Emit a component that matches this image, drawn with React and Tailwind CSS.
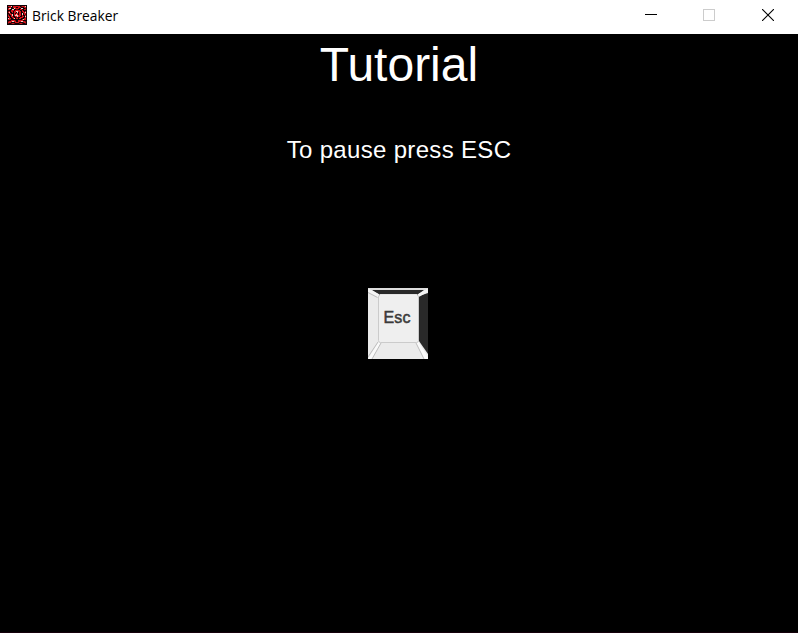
const ICON_ROWS = [
  'kkkkkkkkkkkkkkkkkkkk',
  'krrrwkrrrrrrrkdrrrwk',
  'kkdrkkrrrkkrrrkkkrrk',
  'krwwkkkwrrrrkkwwkkdk',
  'krrkkwwkkddkkrrkkrrk',
  'kkkkrrrkrrrrrkkrkkkk',
  'kdrkrrkrrwwrrrkrrkrk',
  'krwkkrkrrkwkrrkkrrwk',
  'kkrrkkkrkrrkrrkwkrrk',
  'kdkrrwkrrwrkrrkwkrdk',
  'krkkrwkrwwwrrrkrkkrk',
  'krrkrrkkrrwrrkkrrkwk',
  'kkrkkrrkkddkkrrrkkrk',
  'kwrrkkrwkrrkrrkkkrrk',
  'krrdkkkkkkkkkkkrwrrk',
  'kkkkrrrrdkkrrrrrkkkk',
  'kdrrrwwrrkkrrrwwrrdk',
  'krrrkkkkrrrrkkkkdrrk',
  'kdkkdrrdkkkkdrrdkkdk',
  'kkkkkkkkkkkkkkkkkkkk',
];

const ICON_COLORS = { k: '#100306', r: '#d3141b', d: '#650b10', w: '#f0cdc5' };

function AppIcon() {
  return (
    <svg className="h-5 w-5 shrink-0" viewBox="0 0 20 20" shapeRendering="crispEdges">
      {ICON_ROWS.map((row, y) =>
        row.split('').map((c, x) => (
          <rect key={`${x}-${y}`} x={x} y={y} width="1" height="1" fill={ICON_COLORS[c]} />
        ))
      )}
    </svg>
  );
}

function EscKey() {
  return (
    <div className="grid h-[71px] w-[60px]">
      <svg className="col-start-1 row-start-1" width="60" height="71" viewBox="0 0 60 71">
        <rect width="60" height="71" fill="#ebebeb" />
        <path d="M4 2H56L50 6.5H11Z" fill="#292929" />
        <path d="M60 5V66L51 53V8Z" fill="#292929" />
        <path d="M0 1H60" stroke="#d8d8d8" strokeWidth="1.6" />
        <path d="M0 2L10.5 7.5M60 2L50.5 7.5" stroke="#f4f4f4" strokeWidth="3" />
        <path d="M0 4.5L9.5 9.5" stroke="#bdbdbd" strokeWidth="1" />
        <path d="M10.5 54L0 71H4L13 55ZM50.5 54L60 69V71H56L48 55Z" fill="#fafafa" />
        <path d="M10 54L0 69M13 55L4 71M48 55L56 71" fill="none" stroke="#bdbdbd" />
        <rect x="10.5" y="7" width="40" height="47.5" rx="2" fill="#efefef" stroke="#cbcbcb" />
        <path d="M12 7H49" stroke="#f7f7f7" strokeWidth="1.5" />
      </svg>
      <span className="col-start-1 row-start-1 pl-[15.5px] pt-[20px] text-[16px] leading-[20px] tracking-[0.2px] text-[#3a3a3a] [-webkit-text-stroke:0.5px_#3a3a3a]">
        Esc
      </span>
    </div>
  );
}

function TitleBar() {
  return (
    <header className="flex h-[34px] items-start bg-white pl-[7px] text-black">
      <div className="flex pt-[5px]">
        <AppIcon />
        <span className="ml-[5px] inline-block origin-left scale-x-[0.92] whitespace-nowrap font-['Open_Sans',sans-serif] text-[15px] leading-5">
          Brick Breaker
        </span>
      </div>
      <div className="ml-auto flex pt-[9px] pr-[24px]">
        <svg width="12" height="12" viewBox="0 0 12 12" shapeRendering="crispEdges">
          <path d="M0 5.5H12" stroke="#000" />
        </svg>
        <svg className="ml-[46px]" width="12" height="12" viewBox="0 0 12 12">
          <rect x=".5" y=".5" width="11" height="11" fill="none" stroke="#ccc" />
        </svg>
        <svg className="ml-[47px]" width="12" height="12" viewBox="0 0 12 12">
          <path d="M0 0L12 12M12 0L0 12" stroke="#000" strokeWidth="1.1" />
        </svg>
      </div>
    </header>
  );
}

export default function App() {
  return (
    <div className="flex h-[633px] w-[798px] flex-col overflow-hidden bg-black font-['Liberation_Sans',Arial,sans-serif]">
      <TitleBar />
      <main className="flex flex-1 flex-col items-center border-b border-[#14000a] text-white">
        <h1 className="mt-[3px] text-[48px] leading-[56px]">Tutorial</h1>
        <p className="mt-[43px] text-[24px] leading-[28px] tracking-[0.33px]">To pause press ESC</p>
        <div className="mt-[124px] pr-[2px]">
          <EscKey />
        </div>
      </main>
    </div>
  );
}
